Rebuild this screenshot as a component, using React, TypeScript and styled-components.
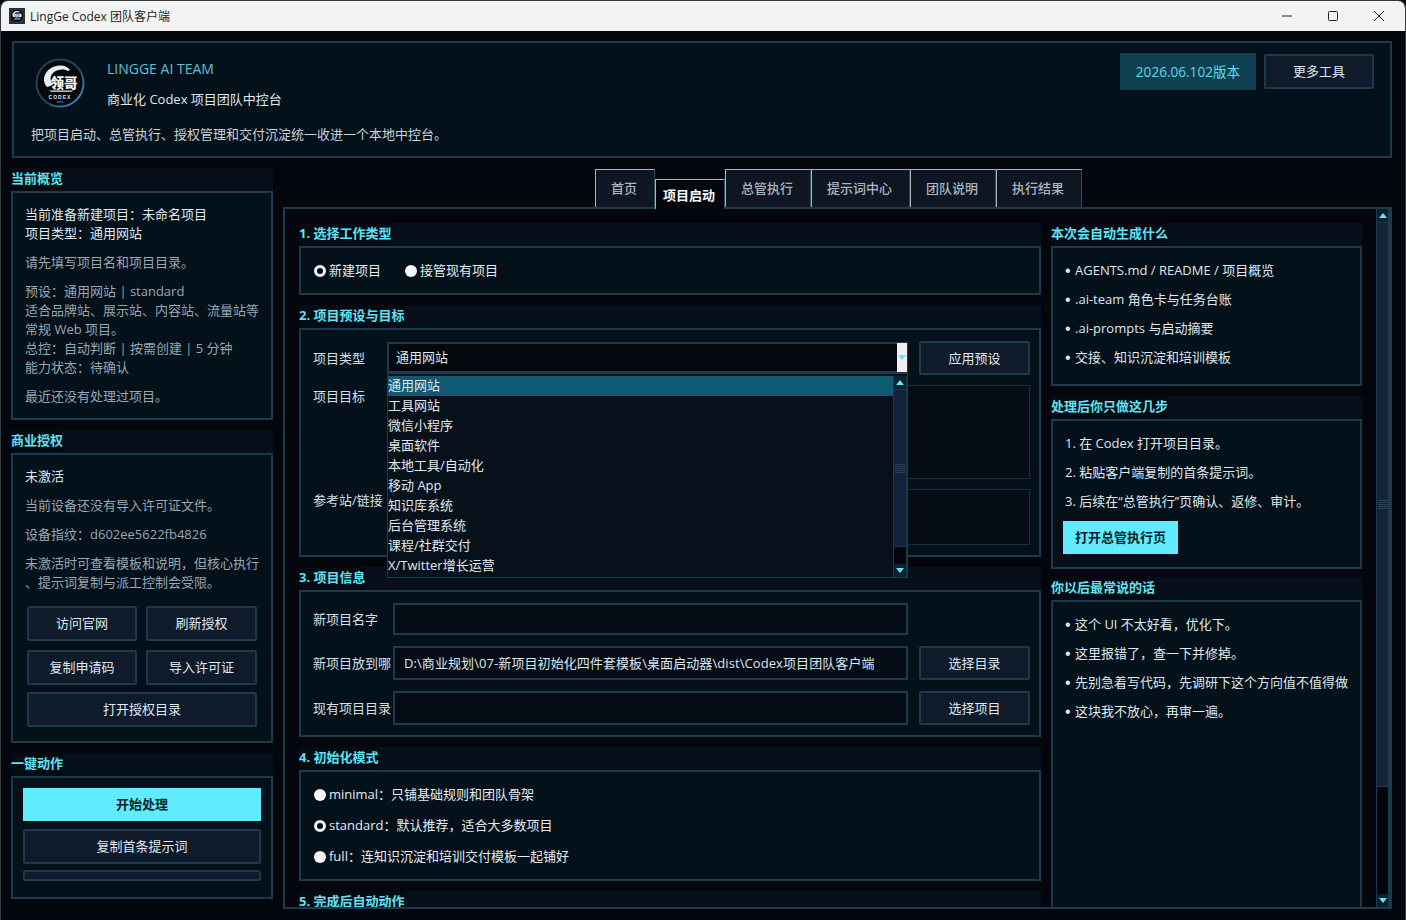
import React from 'react';
import styled, { createGlobalStyle } from 'styled-components';

const line = '#1c3a4b';
const accent = '#5fe3f5';
const text = '#dfe8ee';
const muted = '#98a8b2';
const cardBg = '#04101a';
const btnBg = '#0f1a2b';

const GlobalStyle = createGlobalStyle`
  html, body {
    margin: 0;
    padding: 0;
    background: #0a0c10;
  }
  body {
    font-family: "Open Sans", "Noto Sans CJK SC", sans-serif;
    font-size: 13px;
    line-height: 19px;
    color: ${text};
  }
  * {
    box-sizing: border-box;
  }
`;

const LogoMark = ({ size }: { size: number }) => (
  <svg width={size} height={size} viewBox="0 0 100 100">
    <defs>
      <linearGradient id="ring" x1="0" y1="0" x2="1" y2="1">
        <stop offset="0" stopColor="#2a3a48" />
        <stop offset="0.55" stopColor="#22465f" />
        <stop offset="1" stopColor="#3fa3e0" />
      </linearGradient>
    </defs>
    <circle cx="50" cy="50" r="47" fill="#05080c" stroke="url(#ring)" strokeWidth="4" />
    <path d="M24 58C10 42 22 18 48 15c10-1 17 2 22 9l-3 2c-6-3-13-4-20-2-13 3-19 14-14 25 1 2 2 3 3 4-3 2-8 4-12 5z" fill="#e8eef2" />
    <text x="58" y="59" textAnchor="middle" fontFamily='"Noto Sans CJK SC", sans-serif' fontWeight="900" fontSize="27" fill="#f5f7f8">领哥</text>
    <path d="M28 65h50l-6 2.5H32z" fill="#e8eef2" />
    <text x="50" y="81" textAnchor="middle" fontFamily='"Liberation Sans", sans-serif' fontWeight="700" fontSize="10" letterSpacing="2" fill="#dfe5e8">CODEX</text>
    <path d="M44 88h12" stroke="#3f8fb8" strokeWidth="2" />
  </svg>
);

const Window = styled.div`
  width: 1406px;
  height: 920px;
  display: flex;
  flex-direction: column;
  overflow: hidden;
  background: #03060d;
  border-radius: 8px 8px 0 0;
  border: 1px solid #33383d;
  border-bottom: none;
`;

const TitleBar = styled.div`
  flex: none;
  height: 30px;
  display: flex;
  align-items: center;
  padding: 0 3px 0 8px;
  background: #f3f3f3;
  color: #1c1c1c;
  font-size: 12px;
`;

const AppIcon = styled.div`
  width: 16px;
  height: 16px;
  margin-right: 5px;
  display: flex;
  align-items: center;
  justify-content: center;
  background: #2a2f33;
`;

const TitleText = styled.span`
  flex: 1;
`;

const WinButton = styled.div`
  width: 46px;
  height: 30px;
  display: flex;
  align-items: center;
  justify-content: center;
`;

const Body = styled.div`
  flex: 1;
  min-height: 0;
  padding: 10px 13px 0 10px;
`;

const Header = styled.header`
  height: 117px;
  margin-left: 1px;
  padding: 10px 16px 0 17px;
  background: ${cardBg};
  border: 2px solid ${line};
`;

const HeaderTop = styled.div`
  height: 72px;
  display: flex;
  justify-content: space-between;
  align-items: flex-start;
`;

const Brand = styled.div`
  display: flex;
  align-items: flex-start;
  padding: 5px 0 0 4px;
  gap: 22px;
`;

const BrandText = styled.div`
  display: flex;
  flex-direction: column;
  gap: 12px;
  padding-top: 1px;
`;

const BrandName = styled.div`
  font-size: 14px;
  color: #55c6d8;
`;

const HeaderDesc = styled.div`
  color: #c9d5dc;
`;

const HeaderActions = styled.div`
  display: flex;
  gap: 8px;
  align-items: flex-start;
`;

const VersionBadge = styled.div`
  width: 136px;
  height: 37px;
  display: flex;
  align-items: center;
  justify-content: center;
  font-size: 13.6px;
  color: #5fd8ea;
  background: #0e4052;
`;

const Button = styled.div<{ $w?: number; $h?: number; $top?: number }>`
  width: ${(p) => (p.$w ? `${p.$w}px` : '100%')};
  height: ${(p) => p.$h ?? 35}px;
  margin-top: ${(p) => p.$top ?? 0}px;
  display: flex;
  align-items: center;
  justify-content: center;
  background: ${btnBg};
  border: 2px solid ${line};
  border-radius: 2px;
  color: ${text};
`;

const PrimaryButton = styled.div<{ $w?: number; $h: number }>`
  width: ${(p) => (p.$w ? `${p.$w}px` : '100%')};
  height: ${(p) => p.$h}px;
  display: flex;
  align-items: center;
  justify-content: center;
  background: #5fecff;
  color: #06222b;
  font-weight: 700;
`;

const Columns = styled.div`
  display: grid;
  grid-template-columns: 262px 1109px;
  column-gap: 10px;
  margin-top: 10px;
`;

const Stack = styled.div<{ $w?: number; $gap?: number }>`
  display: flex;
  flex-direction: column;
  gap: ${(p) => p.$gap ?? 10}px;
  ${(p) => (p.$w ? `width: ${p.$w}px; flex: none;` : '')}
`;

const Section = styled.section<{ $pull?: number }>`
  margin-top: ${(p) => -(p.$pull ?? 0)}px;
`;

const SectionHead = styled.div`
  height: 23px;
  display: flex;
  align-items: stretch;
  background: #07101a;
`;

const SectionLabel = styled.span`
  padding-bottom: 3px;
  display: flex;
  align-items: center;
  font-weight: 700;
  color: ${accent};
  background: #040b13;
`;

const Card = styled.div<{ $h: number; $pad?: string; $gap?: number }>`
  position: relative;
  height: ${(p) => p.$h}px;
  padding: ${(p) => p.$pad ?? '12px'};
  display: flex;
  flex-direction: column;
  gap: ${(p) => p.$gap ?? 10}px;
  background: ${cardBg};
  border: 2px solid ${line};
`;

const Group = styled.div<{ $muted?: boolean }>`
  color: ${(p) => (p.$muted ? muted : text)};
`;

const Step = styled.div`
  padding-left: 2px;
  color: ${text};
`;

const Bullet = styled.div`
  display: flex;
  white-space: nowrap;
  color: ${text};
  &::before {
    content: '•';
    flex: none;
    width: 10px;
    font-size: 16px;
    font-family: "Liberation Sans", sans-serif;
  }
`;

const AuthGrid = styled.div`
  display: grid;
  grid-template-columns: 110px 111px;
  grid-template-rows: 36px 34px 35px;
  gap: 8px 9px;
  margin: 4px 0 0 2px;
`;

const WideCell = styled.div`
  grid-column: 1 / 3;
`;

const TrackBar = styled.div`
  height: 11px;
  margin-top: -2px;
  background: ${btnBg};
  border: 2px solid ${line};
  border-radius: 2px;
`;

const Tabs = styled.div`
  height: 41px;
  margin-bottom: -2px;
  padding-left: 312px;
  display: flex;
  align-items: flex-end;
  position: relative;
  z-index: 1;
`;

const Tab = styled.div<{ $active?: boolean }>`
  height: ${(p) => (p.$active ? 30 : 38)}px;
  margin-bottom: ${(p) => (p.$active ? 0 : 2)}px;
  padding: ${(p) => (p.$active ? '6px 9px 0 7px' : '9px 17px 0 15px')};
  background: ${(p) => (p.$active ? '#03060d' : '#0d1622')};
  color: ${(p) => (p.$active ? '#f2f6f8' : '#a9b7c0')};
  border-top: 1px solid #a3b6c1;
  border-left: 1px solid #a3b6c1;
  border-right: 1px solid #2c4b5c;
  font-weight: ${(p) => (p.$active ? 700 : 500)};
`;

const Pane = styled.div`
  height: 702px;
  display: flex;
  border: 2px solid ${line};
  border-right-width: 3px;
  background: #03060d;
  overflow: hidden;
`;

const PaneContent = styled.div`
  flex: 1;
  min-width: 0;
  display: flex;
  gap: 10px;
  align-items: flex-start;
  padding: 14px 14px 0;
`;

const Scroll = styled.div<{ $w: number }>`
  flex: none;
  width: ${(p) => p.$w}px;
  display: flex;
  flex-direction: column;
  background: #02060c;
  border-left: 1px solid ${line};
  border-right: 1px solid ${line};
`;

const ScrollArrow = styled.div`
  flex: none;
  height: 13px;
  display: flex;
  align-items: center;
  justify-content: center;
  background: #0e2030;
`;

const Triangle = styled.div<{ $down?: boolean }>`
  width: 0;
  height: 0;
  border-left: 4px solid transparent;
  border-right: 4px solid transparent;
  ${(p) => (p.$down ? 'border-top' : 'border-bottom')}: 5px solid #63e4f8;
`;

const ScrollThumb = styled.div<{ $h: number }>`
  flex: none;
  height: ${(p) => p.$h}px;
  display: flex;
  align-items: center;
  justify-content: center;
  background: #12233a;
  border-top: 1px solid ${line};
  border-bottom: 1px solid ${line};
`;

const Grip = styled.div`
  width: 10px;
  height: 9px;
  background: repeating-linear-gradient(#2a4256 0 1px, transparent 1px 2px);
`;

const ScrollSpacer = styled.div`
  flex: 1;
`;

const RadioRow = styled.div<{ $gap?: number }>`
  display: flex;
  align-items: center;
  gap: ${(p) => p.$gap ?? 0}px;
`;

const RadioItem = styled.label`
  display: flex;
  align-items: center;
  gap: 3px;
  padding-left: 1px;
  color: #e4ecf0;
`;

const RadioDot = styled.span<{ $on?: boolean }>`
  width: 12px;
  height: 12px;
  border-radius: 50%;
  background: ${(p) => (p.$on ? '#04101a' : '#f5f7f8')};
  border: ${(p) => (p.$on ? '3px solid #f5f7f8' : 'none')};
`;

const FormGrid = styled.div<{ $cols: string; $rows: string; $gapY: number }>`
  display: grid;
  grid-template-columns: ${(p) => p.$cols};
  grid-template-rows: ${(p) => p.$rows};
  column-gap: 11px;
  row-gap: ${(p) => p.$gapY}px;
`;

const FieldLabel = styled.div<{ $top?: boolean }>`
  white-space: nowrap;
  color: #d5e0e6;
  align-self: ${(p) => (p.$top ? 'start' : 'center')};
  padding-top: ${(p) => (p.$top ? 2 : 0)}px;
`;

const ComboWrap = styled.div`
  position: relative;
  height: 31px;
  margin-top: 1px;
`;

const Combo = styled.div`
  height: 31px;
  padding-left: 7px;
  display: flex;
  align-items: center;
  justify-content: space-between;
  background: #03080f;
  border: 2px solid ${line};
`;

const ComboArrow = styled.div`
  width: 10px;
  height: 29px;
  margin-right: -1px;
  padding-top: 12px;
  display: flex;
  justify-content: center;
  background: #eef0f0;
`;

const Dropdown = styled.div`
  position: absolute;
  top: 100%;
  left: 0;
  width: 521px;
  height: 205px;
  z-index: 5;
  display: flex;
  justify-content: space-between;
  padding-top: 2px;
  background: #07111c;
  border: 1px solid ${line};
`;

const OptionList = styled.div`
  width: 505px;
`;

const Option = styled.div<{ $on?: boolean }>`
  height: 20px;
  line-height: 19px;
  background: ${(p) => (p.$on ? '#0f5a70' : 'transparent')};
  color: #e0e8ec;
`;

const TextArea = styled.div`
  grid-column: 2 / 4;
  background: #050c16;
  border: 1px solid #1a3040;
`;

const Input = styled.div`
  padding-left: 9px;
  display: flex;
  align-items: center;
  white-space: nowrap;
  letter-spacing: 0.08px;
  background: #050c16;
  border: 2px solid ${line};
  color: #dfe8ee;
`;

const Scroller = ({ thumb, w }: { thumb: number; w: number }) => (
  <Scroll $w={w}>
    <ScrollArrow>
      <Triangle />
    </ScrollArrow>
    <ScrollThumb $h={thumb}>
      <Grip />
    </ScrollThumb>
    <ScrollSpacer />
    <ScrollArrow>
      <Triangle $down />
    </ScrollArrow>
  </Scroll>
);

const options = [
  '通用网站',
  '工具网站',
  '微信小程序',
  '桌面软件',
  '本地工具/自动化',
  '移动 App',
  '知识库系统',
  '后台管理系统',
  '课程/社群交付',
  'X/Twitter增长运营',
];

const tabs = ['首页', '项目启动', '总管执行', '提示词中心', '团队说明', '执行结果'];

const App = () => (
  <>
    <GlobalStyle />
    <Window>
      <TitleBar>
        <AppIcon>
          <LogoMark size={14} />
        </AppIcon>
        <TitleText>LingGe Codex 团队客户端</TitleText>
        <WinButton>
          <svg width="12" height="12" viewBox="0 0 12 12">
            <path d="M1 6h10" stroke="#222" strokeWidth="1" />
          </svg>
        </WinButton>
        <WinButton>
          <svg width="12" height="12" viewBox="0 0 12 12">
            <rect x="1.5" y="1.5" width="9" height="9" rx="1" fill="none" stroke="#222" strokeWidth="1" />
          </svg>
        </WinButton>
        <WinButton>
          <svg width="12" height="12" viewBox="0 0 12 12">
            <path d="M1 1l10 10M11 1L1 11" stroke="#222" strokeWidth="1" />
          </svg>
        </WinButton>
      </TitleBar>
      <Body>
        <Header>
          <HeaderTop>
            <Brand>
              <LogoMark size={50} />
              <BrandText>
                <BrandName>LINGGE AI TEAM</BrandName>
                <div>商业化 Codex 项目团队中控台</div>
              </BrandText>
            </Brand>
            <HeaderActions>
              <VersionBadge>2026.06.102版本</VersionBadge>
              <Button $w={110} $top={1}>更多工具</Button>
            </HeaderActions>
          </HeaderTop>
          <HeaderDesc>把项目启动、总管执行、授权管理和交付沉淀统一收进一个本地中控台。</HeaderDesc>
        </Header>
        <Columns>
          <Stack>
            <Section>
              <SectionHead>
                <SectionLabel>当前概览</SectionLabel>
              </SectionHead>
              <Card $h={229}>
                <Group>
                  当前准备新建项目：未命名项目
                  <br />
                  项目类型：通用网站
                </Group>
                <Group $muted>请先填写项目名和项目目录。</Group>
                <Group $muted>
                  预设：通用网站 | standard
                  <br />
                  适合品牌站、展示站、内容站、流量站等
                  <br />
                  常规 Web 项目。
                  <br />
                  总控：自动判断 | 按需创建 | 5 分钟
                  <br />
                  能力状态：待确认
                </Group>
                <Group $muted>最近还没有处理过项目。</Group>
              </Card>
            </Section>
            <Section>
              <SectionHead>
                <SectionLabel>商业授权</SectionLabel>
              </SectionHead>
              <Card $h={290}>
                <Group>未激活</Group>
                <Group $muted>当前设备还没有导入许可证文件。</Group>
                <Group $muted>设备指纹：d602ee5622fb4826</Group>
                <Group $muted>
                  未激活时可查看模板和说明，但核心执行
                  <br />
                  、提示词复制与派工控制会受限。
                </Group>
                <AuthGrid>
                  <Button>访问官网</Button>
                  <Button>刷新授权</Button>
                  <Button>复制申请码</Button>
                  <Button>导入许可证</Button>
                  <WideCell>
                    <Button>打开授权目录</Button>
                  </WideCell>
                </AuthGrid>
              </Card>
            </Section>
            <Section>
              <SectionHead>
                <SectionLabel>一键动作</SectionLabel>
              </SectionHead>
              <Card $h={123} $pad="10px 10px" $gap={8}>
                <PrimaryButton $h={33}>开始处理</PrimaryButton>
                <Button $h={35}>复制首条提示词</Button>
                <TrackBar />
              </Card>
            </Section>
          </Stack>
          <div>
            <Tabs>
              {tabs.map((t, i) => (
                <Tab key={t} $active={i === 1}>
                  {t}
                </Tab>
              ))}
            </Tabs>
            <Pane>
              <PaneContent>
                <Stack $w={742}>
                  <Section>
                    <SectionHead>
                      <SectionLabel>1. 选择工作类型</SectionLabel>
                    </SectionHead>
                    <Card $h={49} $pad="13px 12px">
                      <RadioRow $gap={23}>
                        <RadioItem>
                          <RadioDot $on />
                          新建项目
                        </RadioItem>
                        <RadioItem>
                          <RadioDot />
                          接管现有项目
                        </RadioItem>
                      </RadioRow>
                    </Card>
                  </Section>
                  <Section>
                    <SectionHead>
                      <SectionLabel>2. 项目预设与目标</SectionLabel>
                    </SectionHead>
                    <Card $h={229} $pad="11px 12px">
                      <FormGrid $cols="63px 521px 111px" $rows="34px 94px 56px" $gapY={10}>
                        <FieldLabel>项目类型</FieldLabel>
                        <ComboWrap>
                          <Combo>
                            通用网站
                            <ComboArrow>
                              <Triangle $down />
                            </ComboArrow>
                          </Combo>
                          <Dropdown>
                            <OptionList>
                              {options.map((o, i) => (
                                <Option key={o} $on={i === 0}>
                                  {o}
                                </Option>
                              ))}
                            </OptionList>
                            <Scroller thumb={158} w={14} />
                          </Dropdown>
                        </ComboWrap>
                        <Button $h={34}>应用预设</Button>
                        <FieldLabel $top>项目目标</FieldLabel>
                        <TextArea />
                        <FieldLabel $top>参考站/链接</FieldLabel>
                        <TextArea />
                      </FormGrid>
                    </Card>
                  </Section>
                  <Section>
                    <SectionHead>
                      <SectionLabel>3. 项目信息</SectionLabel>
                    </SectionHead>
                    <Card $h={147} $pad="11px 12px">
                      <FormGrid $cols="69px 515px 111px" $rows="32px 34px 34px" $gapY={11}>
                        <FieldLabel>新项目名字</FieldLabel>
                        <Input />
                        <span />
                        <FieldLabel>新项目放到哪</FieldLabel>
                        <Input>D:\商业规划\07-新项目初始化四件套模板\桌面启动器\dist\Codex项目团队客户端</Input>
                        <Button $h={34}>选择目录</Button>
                        <FieldLabel>现有项目目录</FieldLabel>
                        <Input />
                        <Button $h={34}>选择项目</Button>
                      </FormGrid>
                    </Card>
                  </Section>
                  <Section>
                    <SectionHead>
                      <SectionLabel>4. 初始化模式</SectionLabel>
                    </SectionHead>
                    <Card $h={111} $gap={12} $pad="13px 12px">
                      <RadioItem>
                        <RadioDot />
                        minimal：只铺基础规则和团队骨架
                      </RadioItem>
                      <RadioItem>
                        <RadioDot $on />
                        standard：默认推荐，适合大多数项目
                      </RadioItem>
                      <RadioItem>
                        <RadioDot />
                        full：连知识沉淀和培训交付模板一起铺好
                      </RadioItem>
                    </Card>
                  </Section>
                  <SectionHead>
                    <SectionLabel>5. 完成后自动动作</SectionLabel>
                  </SectionHead>
                </Stack>
                <Stack $w={311}>
                  <Section>
                    <SectionHead>
                      <SectionLabel>本次会自动生成什么</SectionLabel>
                    </SectionHead>
                    <Card $h={140} $pad="13px 12px">
                      <Bullet>AGENTS.md / README / 项目概览</Bullet>
                      <Bullet>.ai-team 角色卡与任务台账</Bullet>
                      <Bullet>.ai-prompts 与启动摘要</Bullet>
                      <Bullet>交接、知识沉淀和培训模板</Bullet>
                    </Card>
                  </Section>
                  <Section>
                    <SectionHead>
                      <SectionLabel>处理后你只做这几步</SectionLabel>
                    </SectionHead>
                    <Card $h={150} $pad="13px 10px">
                      <Step>1. 在 Codex 打开项目目录。</Step>
                      <Step>2. 粘贴客户端复制的首条提示词。</Step>
                      <Step>3. 后续在“总管执行”页确认、返修、审计。</Step>
                      <PrimaryButton $w={115} $h={33}>打开总管执行页</PrimaryButton>
                    </Card>
                  </Section>
                  <Section $pull={2}>
                    <SectionHead>
                      <SectionLabel>你以后最常说的话</SectionLabel>
                    </SectionHead>
                    <Card $h={330} $pad="13px 12px">
                      <Bullet>这个 UI 不太好看，优化下。</Bullet>
                      <Bullet>这里报错了，查一下并修掉。</Bullet>
                      <Bullet>先别急着写代码，先调研下这个方向值不值得做</Bullet>
                      <Bullet>这块我不放心，再审一遍。</Bullet>
                    </Card>
                  </Section>
                </Stack>
              </PaneContent>
              <Scroller thumb={565} w={13} />
            </Pane>
          </div>
        </Columns>
      </Body>
    </Window>
  </>
);

export default App;
